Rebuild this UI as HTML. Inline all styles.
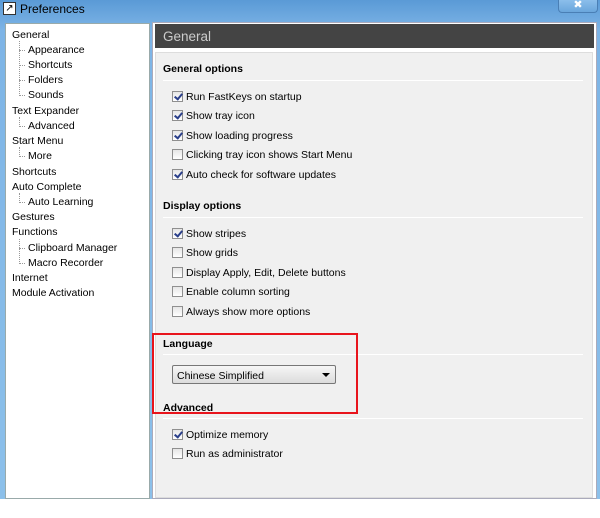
<!DOCTYPE html><html><head><style>
*{margin:0;padding:0;box-sizing:border-box}
body{width:600px;height:518px;background:#fff;position:relative;font-family:"Liberation Sans","DejaVu Sans",sans-serif;font-size:10.5px;color:#000;overflow:hidden}
.win{position:absolute;left:0;top:0;width:600px;height:499px;background:linear-gradient(#5a9ad6,#7db4e6 30px,#8cc0ea);}
.title{position:absolute;left:20px;top:2px;font-size:12px;color:#000}
.ico{position:absolute;left:3px;top:2px;width:13px;height:13px;border:1px solid #333;background:#fff;font-size:10px;line-height:11px;text-align:center}
.close{position:absolute;left:558px;top:-1px;width:40px;height:14px;border:1px solid #4a7fb5;border-top:none;border-radius:0 0 4px 4px;background:linear-gradient(#8ec0ec,#6aa6dc);color:#fff;font-size:11px;font-weight:bold;text-align:center;line-height:12px}
.side{position:absolute;left:5px;top:23px;width:145px;height:476px;background:#fff;border:1px solid #9aa}
.side div{position:absolute;white-space:nowrap;font-size:10.5px}
.side .tl{position:absolute;border-left:1px dotted #999}
.side .th{position:absolute;width:6px;border-top:1px dotted #999}
.right{position:absolute;left:152px;top:22px;width:445px;height:477px;background:#fff;border:1px solid #aab}
.hdr{position:absolute;left:2px;top:1px;right:2px;height:24px;background:#444;color:#ccc;font-size:13.5px;padding:5px 0 0 8px}
.cont{position:absolute;left:2px;top:29px;right:3px;bottom:0;background:#f0f0f0;border:1px solid #ddd}
.r{position:absolute;white-space:nowrap}
.h{font-weight:bold;font-size:10.5px}
.ln{position:absolute;left:163px;width:420px;height:1px;background:#c8c8c8;border-bottom:1px solid #fff}
.cb{position:absolute;left:172px;width:11px;height:11px;border:1px solid #8f8f8f;background:linear-gradient(#e6e6e6,#fff)}
.cb.c::after{content:"";position:absolute;left:3px;top:0px;width:3px;height:6px;border:solid #2a3f8a;border-width:0 2px 2px 0;transform:rotate(40deg)}
.t{position:absolute;left:186px;white-space:nowrap}
</style></head><body>
<div class="win">
<div class="ico">↗</div><div class="title">Preferences</div><div class="close">✖</div>
<div class="side">
<span class="tl" style="left:13px;top:17px;height:55px"></span>
<span class="th" style="left:13px;top:26px"></span><span class="th" style="left:13px;top:41px"></span><span class="th" style="left:13px;top:56px"></span><span class="th" style="left:13px;top:71px"></span>
<span class="tl" style="left:13px;top:93px;height:10px"></span><span class="th" style="left:13px;top:102px"></span>
<span class="tl" style="left:13px;top:123px;height:10px"></span><span class="th" style="left:13px;top:132px"></span>
<span class="tl" style="left:13px;top:169px;height:10px"></span><span class="th" style="left:13px;top:178px"></span>
<span class="tl" style="left:13px;top:215px;height:25px"></span><span class="th" style="left:13px;top:224px"></span><span class="th" style="left:13px;top:239px"></span>
<div style="left:6px;top:5px">General</div>
<div style="left:22px;top:20px">Appearance</div>
<div style="left:22px;top:35px">Shortcuts</div>
<div style="left:22px;top:50px">Folders</div>
<div style="left:22px;top:65px">Sounds</div>
<div style="left:6px;top:81px">Text Expander</div>
<div style="left:22px;top:96px">Advanced</div>
<div style="left:6px;top:111px">Start Menu</div>
<div style="left:22px;top:126px">More</div>
<div style="left:6px;top:142px">Shortcuts</div>
<div style="left:6px;top:157px">Auto Complete</div>
<div style="left:22px;top:172px">Auto Learning</div>
<div style="left:6px;top:187px">Gestures</div>
<div style="left:6px;top:202px">Functions</div>
<div style="left:22px;top:218px">Clipboard Manager</div>
<div style="left:22px;top:233px">Macro Recorder</div>
<div style="left:6px;top:248px">Internet</div>
<div style="left:6px;top:263px">Module Activation</div>
</div>
<div class="right"><div class="hdr">General</div><div class="cont"></div></div>
</div>
<div class="r h" style="left:163px;top:63px">General options</div><div class="ln" style="top:80px"></div>
<div class="cb c" style="top:91px"></div><div class="t" style="top:91px">Run FastKeys on startup</div>
<div class="cb c" style="top:110px"></div><div class="t" style="top:110px">Show tray icon</div>
<div class="cb c" style="top:130px"></div><div class="t" style="top:130px">Show loading progress</div>
<div class="cb" style="top:149px"></div><div class="t" style="top:149px">Clicking tray icon shows Start Menu</div>
<div class="cb c" style="top:169px"></div><div class="t" style="top:169px">Auto check for software updates</div>
<div class="r h" style="left:163px;top:200px">Display options</div><div class="ln" style="top:217px"></div>
<div class="cb c" style="top:228px"></div><div class="t" style="top:228px">Show stripes</div>
<div class="cb" style="top:247px"></div><div class="t" style="top:247px">Show grids</div>
<div class="cb" style="top:267px"></div><div class="t" style="top:267px">Display Apply, Edit, Delete buttons</div>
<div class="cb" style="top:286px"></div><div class="t" style="top:286px">Enable column sorting</div>
<div class="cb" style="top:306px"></div><div class="t" style="top:306px">Always show more options</div>
<div class="r h" style="left:163px;top:338px">Language</div><div class="ln" style="top:354px"></div>
<div style="position:absolute;left:172px;top:365px;width:164px;height:19px;border:1px solid #777;border-radius:2px;background:linear-gradient(#f6f6f6,#dcdcdc);padding:4px 0 0 4px;font-size:10.5px">Chinese Simplified<span style="position:absolute;right:5px;top:7px;border:4px solid transparent;border-top:4px solid #000;border-bottom:0"></span></div>
<div class="r h" style="left:163px;top:402px">Advanced</div><div class="ln" style="top:418px"></div>
<div class="cb c" style="top:429px"></div><div class="t" style="top:429px">Optimize memory</div>
<div class="cb" style="top:448px"></div><div class="t" style="top:448px">Run as administrator</div>
<div style="position:absolute;left:152px;top:333px;width:206px;height:81px;border:2px solid #e8141c"></div>
</body></html>
